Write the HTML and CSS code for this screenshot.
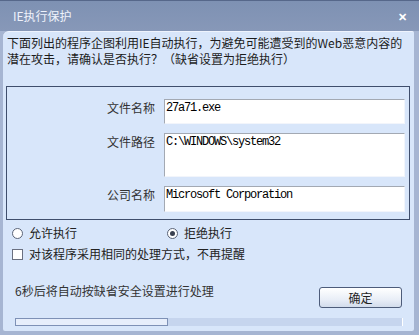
FILE: index.html
```html
<!DOCTYPE html>
<html lang="zh-CN">
<head>
  <meta charset="UTF-8">
  <title>IE执行保护</title>
  <link rel="stylesheet" href="styles.css">
</head>
<body>

  <div class="window">
    <div class="titlebar">
      <span class="title">IE执行保护</span>
      <span class="close">&#x2715;</span>
    </div>

    <div class="panel">
      <p class="intro">下面列出的程序企图利用IE自动执行，为避免可能遭受到的Web恶意内容的<br>潜在攻击，请确认是否执行？（缺省设置为拒绝执行）</p>

      <div class="group">
        <span class="label">文件名称</span>
        <div class="field">27a71.exe</div>
        <span class="label">文件路径</span>
        <div class="field tall">C:\WINDOWS\system32</div>
        <span class="label">公司名称</span>
        <div class="field short">Microsoft Corporation</div>
      </div>

      <div class="choices">
        <label class="choice"><span class="radio"></span>允许执行</label>
        <label class="choice"><span class="radio checked"></span>拒绝执行</label>
      </div>

      <label class="remember"><span class="check"></span>对该程序采用相同的处理方式，不再提醒</label>

      <div class="footer">
        <span class="countdown">6秒后将自动按缺省安全设置进行处理</span>
        <button class="ok">确定</button>
      </div>

      <div class="progress">
        <div class="bar" style="width: 39.5%"></div>
      </div>
    </div>
  </div>

</body>
</html>
```

FILE: styles.css
```css
body {
  margin: 0;
  font-family: "Noto Sans CJK SC", "Liberation Sans", sans-serif;
  font-size: 12px;
  color: #1f1f1f;
  background-color: #ffffff;
}
.window {
  width: 419px;
  height: 335px;
  box-sizing: border-box;
  background-color: #a6b5d2;
  display: flex;
  flex-direction: column;
  overflow: hidden;
}
.titlebar {
  height: 31px;
  flex: none;
  box-sizing: border-box;
  border-top: 1px solid #56678a;
  background: linear-gradient(#7e91b3, #8798b8);
  display: flex;
  align-items: center;
  justify-content: space-between;
  padding: 0 12px 0 13px;
  color: #eef2fb;
}
.title {
  font-size: 12px;
  line-height: 14px;
}
.close {
  font-size: 11px;
  font-weight: bold;
  color: #ffffff;
}
.panel {
  flex: 1;
  margin: 0 5px 4px 3px;
  background-color: #d8e6fa;
  border-top: 1px solid #eef3fd;
  border-radius: 6px 2px 2px 2px;
  display: flex;
  flex-direction: column;
}
.intro {
  margin: 3px 6px 19px 4px;
  line-height: 16px;
  font-size: 12px;
  color: #1c1c1c;
  white-space: nowrap;
}
.group {
  margin: 0 4px 0 3px;
  border: 1px solid #3f4e6c;
  padding: 12px 4px 7px 0;
  display: grid;
  grid-template-columns: 148px 1fr;
  column-gap: 9px;
  row-gap: 9px;
}
.label {
  text-align: right;
  line-height: 14px;
  padding-top: 2px;
  color: #333333;
}
.field {
  height: 25px;
  box-sizing: border-box;
  background-color: #ffffff;
  border-top: 1px solid #a3a9b3;
  border-left: 1px solid #a3a9b3;
  border-right: 1px solid #f2f5fb;
  border-bottom: 1px solid #f2f5fb;
  padding: 2px 1px;
  font-family: "Liberation Mono", monospace;
  font-size: 12px;
  line-height: 13px;
  letter-spacing: -1.2px;
  color: #000000;
}
.field.tall {
  height: 44px;
}
.field.short {
  height: 26px;
}
.choices {
  display: flex;
  margin: 6px 0 0 9px;
}
.choice {
  display: flex;
  align-items: center;
  gap: 6px;
  width: 155px;
  line-height: 14px;
  color: #222222;
}
.radio {
  width: 11px;
  height: 11px;
  box-sizing: border-box;
  border: 1px solid #5a6478;
  border-radius: 50%;
  background-color: #ffffff;
  display: flex;
  align-items: center;
  justify-content: center;
}
.radio.checked::after {
  content: "";
  width: 5px;
  height: 5px;
  border-radius: 50%;
  background-color: #3a4150;
}
.remember {
  display: flex;
  align-items: center;
  gap: 6px;
  margin: 7px 0 0 9px;
  line-height: 14px;
  color: #222222;
}
.check {
  width: 11px;
  height: 11px;
  box-sizing: border-box;
  border: 1px solid #6a7080;
  background-color: #ffffff;
}
.footer {
  display: flex;
  justify-content: space-between;
  align-items: flex-start;
  margin: 23px 12px 0 12px;
}
.countdown {
  line-height: 14px;
  color: #333333;
}
.ok {
  width: 83px;
  height: 21px;
  margin-top: 3px;
  border: 1px solid #4d5c7a;
  border-radius: 3px;
  background: linear-gradient(#ffffff, #e9eef7 60%, #d2dcec);
  font-family: inherit;
  font-size: 12px;
  color: #1f1f1f;
  padding: 0;
}
.progress {
  margin: 10px 11px 0 12px;
  height: 8px;
  background-color: #c6d5ee;
  border-right: 1px solid #ffffff;
  display: flex;
}
.bar {
  box-sizing: border-box;
  border: 1px solid #7e91b6;
  background-color: #e7eefb;
}
```
